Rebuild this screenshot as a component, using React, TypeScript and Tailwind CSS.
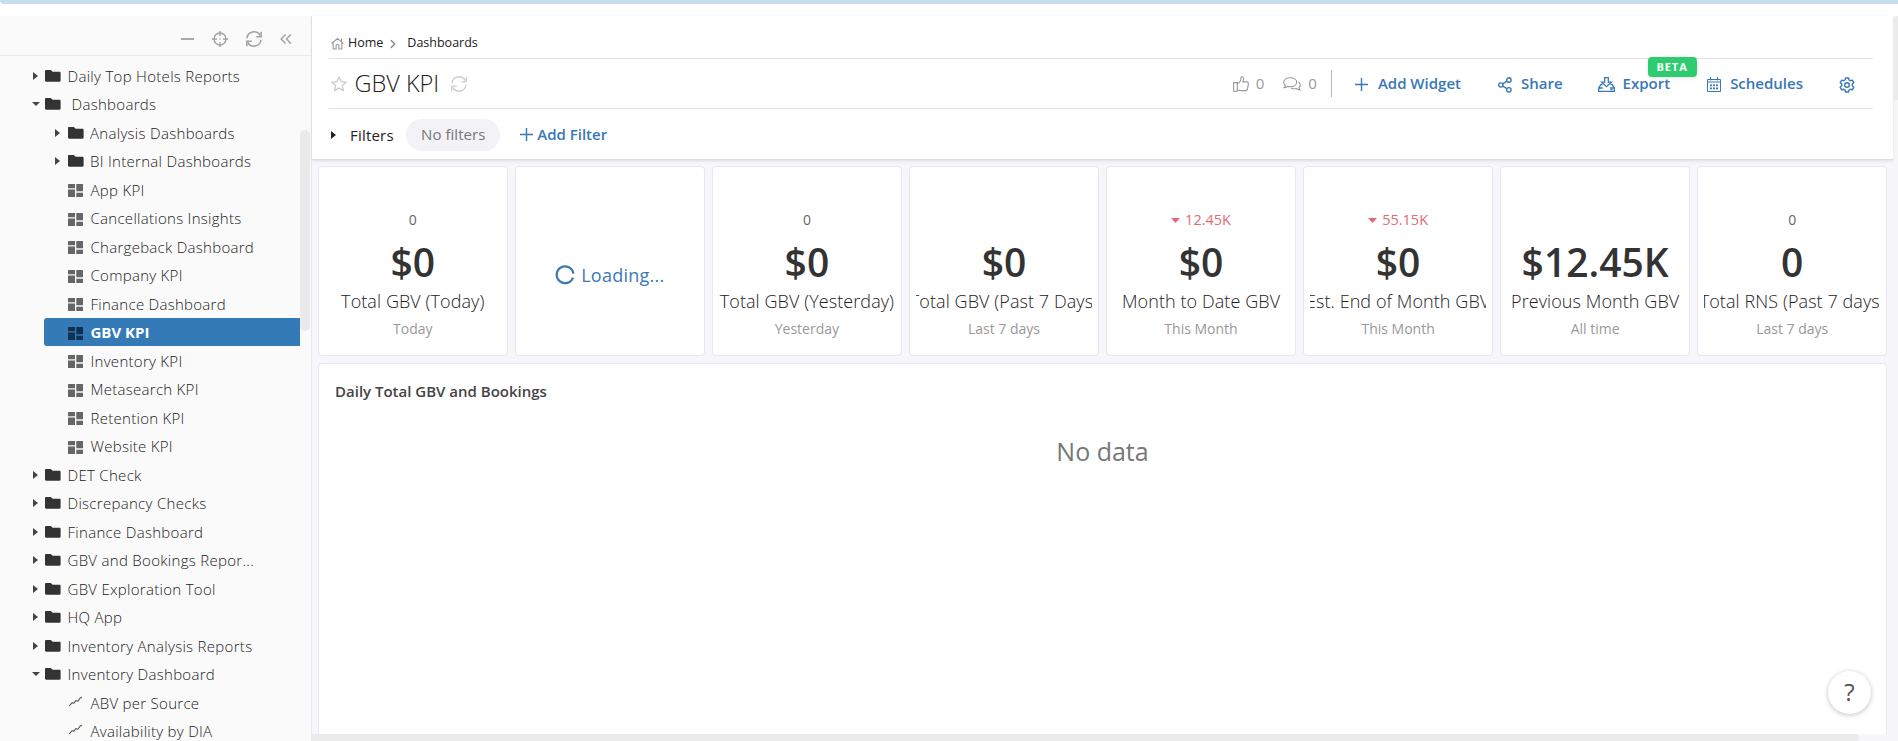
import React from "react";
import { LuChevronRight } from "react-icons/lu";

type Kind = "folder" | "board" | "chart";
type Node = { label: string; kind: Kind; level: 0 | 1; open?: boolean; active?: boolean; shift?: boolean };

const nodes: Node[] = [
  { label: "Daily Top Hotels Reports", kind: "folder", level: 0 },
  { label: "Dashboards", kind: "folder", level: 0, open: true, shift: true },
  { label: "Analysis Dashboards", kind: "folder", level: 1 },
  { label: "BI Internal Dashboards", kind: "folder", level: 1 },
  { label: "App KPI", kind: "board", level: 1 },
  { label: "Cancellations Insights", kind: "board", level: 1 },
  { label: "Chargeback Dashboard", kind: "board", level: 1 },
  { label: "Company KPI", kind: "board", level: 1 },
  { label: "Finance Dashboard", kind: "board", level: 1 },
  { label: "GBV KPI", kind: "board", level: 1, active: true },
  { label: "Inventory KPI", kind: "board", level: 1 },
  { label: "Metasearch KPI", kind: "board", level: 1 },
  { label: "Retention KPI", kind: "board", level: 1 },
  { label: "Website KPI", kind: "board", level: 1 },
  { label: "DET Check", kind: "folder", level: 0 },
  { label: "Discrepancy Checks", kind: "folder", level: 0 },
  { label: "Finance Dashboard", kind: "folder", level: 0 },
  { label: "GBV and Bookings Repor...", kind: "folder", level: 0 },
  { label: "GBV Exploration Tool", kind: "folder", level: 0 },
  { label: "HQ App", kind: "folder", level: 0 },
  { label: "Inventory Analysis Reports", kind: "folder", level: 0 },
  { label: "Inventory Dashboard", kind: "folder", level: 0, open: true },
  { label: "ABV per Source", kind: "chart", level: 1 },
  { label: "Availability by DIA", kind: "chart", level: 1 },
];

type Card = { delta?: string; down?: boolean; value?: string; title?: string; period?: string; loading?: boolean };

const cards: Card[] = [
  { delta: "0", value: "$0", title: "Total GBV (Today)", period: "Today" },
  { loading: true },
  { delta: "0", value: "$0", title: "Total GBV (Yesterday)", period: "Yesterday" },
  { value: "$0", title: "Total GBV (Past 7 Days)", period: "Last 7 days" },
  { delta: "12.45K", down: true, value: "$0", title: "Month to Date GBV", period: "This Month" },
  { delta: "55.15K", down: true, value: "$0", title: "Est. End of Month GBV", period: "This Month" },
  { value: "$12.45K", title: "Previous Month GBV", period: "All time" },
  { delta: "0", value: "0", title: "Total RNS (Past 7 days)", period: "Last 7 days" },
];

function Refresh({ className }: { className: string }) {
  return (
    <svg viewBox="0 0 16 16" className={className} fill="none" stroke="currentColor">
      <path d="M1 7.2A7 7 0 0 1 14.2 4.6M15 8.8A7 7 0 0 1 1.8 11.4" />
      <path d="M15.2.8v5h-5M.8 15.2v-5h5" />
    </svg>
  );
}

function Caret({ open }: { open?: boolean }) {
  return open ? (
    <svg viewBox="0 0 8 4" className="h-1 w-2" fill="#444">
      <path d="M0 0h8L4 4z" />
    </svg>
  ) : (
    <svg viewBox="0 0 5 8" className="ml-px h-2 w-[5px]" fill="#444">
      <path d="M0 0l5 4-5 4z" />
    </svg>
  );
}

function NodeIcon({ kind, active }: { kind: Kind; active?: boolean }) {
  if (kind === "folder")
    return (
      <svg viewBox="0 0 16 12" className="h-3 w-4 shrink-0" fill="#333">
        <path d="M1.2 0h4.6l1.800 1.700h6.800c.8 0 1.200.5 1.200 1.200v7.600c0 .8-.4 1.200-1.200 1.200H1.200C.4 11.700 0 11.300 0 10.500V1.200C0 .4.4 0 1.200 0z" />
      </svg>
    );
  if (kind === "board")
    return (
      <svg viewBox="0 0 15 13" className="mt-0.5 h-[13px] w-[15px] shrink-0" fill={active ? "#103250" : "#666"}>
        <path d="M.6 0H7v4.300H0V.6Q0 0 .6 0zM0 5.600h7V13H.6Q0 13 0 12.400zM8.300 0h6.100q.6 0 .6.6v6.700H8.300zM8.300 8.700H15v3.700q0 .6-.6.6H8.300z" />
      </svg>
    );
  return (
    <svg viewBox="0 0 15 12" className="mb-0.5 h-3 w-[15px] shrink-0" fill="none" stroke="#555" strokeWidth="1.100">
      <path d="M1.200 9.900l3-3.300 1.500.8 2.100-2.700 2.100.5 2.300-3.300 1.800-.7" />
    </svg>
  );
}

function Row({ node }: { node: Node }) {
  return (
    <div className="flex h-[28.5px] items-center">
      <div className={node.level === 0 ? "flex w-[45px] shrink-0 justify-start pl-8" : node.kind === "folder" ? "flex w-[67.5px] shrink-0 pl-[54px]" : "w-[44px] shrink-0"}>
        {node.kind === "folder" && <Caret open={node.open} />}
      </div>
      <div
        className={
          node.active
            ? "flex h-7 flex-1 items-center rounded-l-[3px] bg-[#337ab7] pl-6 text-[15px] font-bold text-white"
            : node.kind === "folder"
              ? "flex flex-1 items-center text-[15px] font-light tracking-[0.3px] text-[#222]"
              : "flex flex-1 items-center pl-6 text-[15px] font-light tracking-[0.28px] text-[#222]"
        }
      >
        <NodeIcon kind={node.kind} active={node.active} />
        <span className={node.shift ? "ml-[10.5px] whitespace-nowrap" : node.kind === "folder" ? "ml-[6.5px] whitespace-nowrap" : "ml-[7.5px] whitespace-nowrap"}>{node.label}</span>
      </div>
    </div>
  );
}

function Kpi({ card }: { card: Card }) {
  if (card.loading)
    return (
      <div className="flex min-w-0 items-center justify-center rounded border border-[#e7e8ef] bg-white pt-[27px] text-lg leading-6 tracking-[0.25px] text-[#3b79b3]">
        <svg viewBox="0 0 20 20" className="mr-1.5 size-5" fill="none" stroke="currentColor" strokeWidth="2.200">
          <path d="M18 12.600A8.400 8.400 0 1 1 18.400 8.600" />
        </svg>
        Loading...
      </div>
    );
  return (
    <div className="flex min-w-0 flex-col items-center overflow-hidden rounded border border-[#e7e8ef] bg-white px-1.5 pt-[43px]">
      <div className={card.down ? "flex h-5 items-center text-[14.5px] text-[#e26a73]" : "flex h-5 items-center text-sm text-[#666]"}>
        {card.down && (
          <svg viewBox="0 0 9 5" className="mr-[5px] h-[5px] w-[9px]" fill="currentColor">
            <path d="M0 0h9L4.500 5z" />
          </svg>
        )}
        {card.delta}
      </div>
      <div className="mt-[9px] h-[46px] text-[39px] leading-[46px] font-semibold text-[#333]">{card.value}</div>
      <div className="flex h-8 w-full justify-center overflow-hidden text-lg leading-8 font-light tracking-[0.08px] whitespace-nowrap text-[#222]">
        <span className="shrink-0">{card.title}</span>
      </div>
      <div className="mt-0.5 text-sm leading-5 text-[#999]">{card.period}</div>
    </div>
  );
}

export default function App() {
  return (
    <div className="relative flex h-[741px] w-full flex-col overflow-hidden bg-white font-['Open_Sans',sans-serif]">
      <div className="h-1 shrink-0 rounded-bl bg-[#c5dfee]" />
      <div className="mt-3 flex min-h-0 flex-1">
        <aside className="flex w-[312px] shrink-0 flex-col border-r border-[#e8e8ee] bg-[#fafafa]">
          <div className="flex h-10 shrink-0 items-center border-b border-[#eaeaea] pt-[7px] pl-[181px] text-[#a3a3a3]">
            <div className="h-[1.5px] w-[13px] bg-[#a8a8a8]" />
            <svg viewBox="0 0 16 16" className="ml-[18px] size-4" fill="none" stroke="currentColor" strokeWidth="1.400">
              <circle cx="8" cy="8" r="6" />
              <path d="M8 0v5M8 11v5M0 8h5M11 8h5M7.500 8h1" />
            </svg>
            <Refresh className="ml-[18px] size-4 stroke-[1.6]" />
            <svg viewBox="0 0 12 10" className="ml-[18px] h-2.5 w-3" fill="none" stroke="currentColor" strokeWidth="1.500">
              <path d="M5.500.5L1.200 5l4.300 4.500M10.800.5L6.500 5l4.300 4.500" />
            </svg>
          </div>
          <div className="flex min-h-0 flex-1">
            <nav className="w-[300px] shrink-0 overflow-hidden pt-[5.5px]">
              {nodes.map((n, i) => (
                <Row key={i} node={n} />
              ))}
            </nav>
            <div className="mt-[74px] h-[201px] w-2.5 rounded-[5px] bg-[#eaeaea]" />
          </div>
        </aside>

        <main className="flex min-w-0 flex-1 flex-col bg-[#f6f6fb]">
          <div className="flex h-[144px] shrink-0">
            <header className="w-[1581px] shrink-0 border-b border-[#dcdde2] bg-white pr-5 pl-[17px] shadow-[0_1px_3px_rgba(0,0,0,0.1)]">
              <div className="flex h-[43px] items-center border-b border-[#e3e3e3] pt-[13px] text-[12.5px] text-[#222]">
                <svg viewBox="0 0 14 13" className="mr-1 ml-0.5 h-[13px] w-[13px]" fill="none" stroke="#999" strokeWidth="1.200">
                  <path d="M.6 6.500L7 1l6.400 5.500M2.300 5.200v7.200h3.200V8.200q1.500-1.800 3 0v4.200h3.200V5.200M11.300 4V1.500" />
                </svg>
                Home
                <LuChevronRight className="mr-[7px] ml-[3px] size-3.5 text-[#888]" strokeWidth={2.5} />
                Dashboards
              </div>
              <div className="flex h-[50px] items-center border-b border-[#e3e3e3]">
                <svg viewBox="0 0 16 16" className="ml-[1.5px] size-4" fill="none" stroke="#ccc" strokeWidth="1.300">
                  <path d="M8 1l2.100 4.600 5 .6-3.700 3.400 1 5L8 12.100l-4.400 2.500 1-5L.9 6.200l5-.6z" />
                </svg>
                <h1 className="mb-0.5 ml-2 text-[23.5px] leading-8 font-light text-[#222]">GBV KPI</h1>
                <Refresh className="ml-3 size-4 stroke-[1.3] text-[#ccc]" />
                <div className="ml-auto flex items-center text-[15px] text-[#999]">
                  <svg viewBox="0 0 16 16" className="mr-[7px] size-4" fill="none" stroke="currentColor" strokeWidth="1.100">
                    <path d="M.6 6.600h3.700v8.600H.6zM4.300 7.500c2.200-.6 3.700-2.700 3.700-5.400 0-2 2.600-1.900 2.600.3 0 1.500-.4 2.500-.8 3.500h4c1.500 0 1.900 1.300 1.300 2.400.4.600.3 1.300-.2 1.800.3.700.1 1.400-.4 1.800.3 1.700-.5 2.700-2 2.700H8.300c-1.600 0-2.400-.7-4-.9" />
                  </svg>
                  0
                  <svg viewBox="0 0 18 14" className="mr-[7px] ml-[19px] h-3.5 w-[18px]" fill="none" stroke="currentColor" strokeWidth="1.100">
                    <path d="M7.200.7c3.700 0 6.500 1.900 6.500 4.500s-2.800 4.500-6.500 4.500c-.9 0-1.700-.1-2.500-.3-.9.8-2.100 1.200-3.600 1.300.8-.8 1.200-1.500 1.300-2.300C1.300 7.500.7 6.400.7 5.200.7 2.600 3.500.7 7.200.7zM15.300 5c1.300.7 2 1.700 2 2.900 0 1-.5 1.900-1.400 2.600.1.900.5 1.600 1.200 2.500-1.500-.1-2.600-.6-3.400-1.400-2 .4-4 .2-5.600-.7" />
                  </svg>
                  0
                </div>
                <div className="ml-3.5 h-[27px] w-px bg-[#bbb]" />
                <div className="mb-px flex items-center text-[15px] font-semibold text-[#3878b5]">
                  <svg viewBox="0 0 13 13" className="mt-[3px] mr-2.5 ml-[23px] size-[13px]" stroke="currentColor" strokeWidth="1.400">
                    <path d="M6.500 0v13M0 6.500h13" />
                  </svg>
                  Add Widget
                  <svg viewBox="0 0 14 16" className="mt-[3px] mr-[9px] ml-[37px] h-4 w-3.5" fill="none" stroke="currentColor" strokeWidth="1.400">
                    <circle cx="2.800" cy="8" r="2.100" />
                    <circle cx="10.900" cy="3" r="2.200" />
                    <circle cx="10.900" cy="12.800" r="2.200" />
                    <path d="M4.700 6.900L9 4.200M4.700 9.100L9 11.700" />
                  </svg>
                  Share
                  <svg viewBox="0 0 17 15" className="mt-[3px] mr-2 ml-[35px] h-[15px] w-[17px]" fill="none" stroke="currentColor" strokeWidth="1.300">
                    <path d="M6.700.7h3.600v4.500h3L8.500 9.700 3.700 5.200h3zM4.500 7.500H3L.7 11v3.300h15.600V11L14 7.500h-1.500M.7 11h4M12 11h4.300M12.500 12.600h2" />
                  </svg>
                  <div className="relative">
                    Export
                    <span className="absolute -top-[15px] left-[25px] flex h-5 w-[49px] items-center justify-center rounded bg-[#2ecc71] text-[11px] font-bold tracking-[0.9px] text-white shadow-[0_1px_4px_rgba(0,0,0,0.12)]">
                      BETA
                    </span>
                  </div>
                  <svg viewBox="0 0 14 15" className="mt-[3px] mr-[9px] ml-[37px] h-[15px] w-3.5" fill="none" stroke="currentColor" strokeWidth="1">
                    <path d="M.5 2.500h13v12H.5zM.5 5h13M3.500 0v3.500M10.500 0v3.500" />
                    <path strokeWidth="1.800" strokeDasharray="2 1" d="M3 8.400h8M3 11.400h8" />
                  </svg>
                  Schedules
                  <svg viewBox="0 0 16 16" className="mt-[3px] mr-[18px] ml-[36px] size-4" fill="none" stroke="currentColor" strokeWidth="1.400" strokeLinejoin="round">
                    <circle cx="8" cy="8" r="2.300" />
                    <path d="M6.500 1h3l.5 2 1.300.7 2-.6 1.500 2.500-1.500 1.500v1.700l1.500 1.500-1.500 2.500-2-.5-1.300.7-.5 2h-3l-.5-2-1.300-.7-2 .5-1.500-2.500 1.500-1.500V7.100L1.200 5.600l1.500-2.500 2 .6L6 3z" />
                  </svg>
                </div>
              </div>
              <div className="flex h-[50px] items-center pt-0.5 text-[15px]">
                <svg viewBox="0 0 5 8" className="ml-[1.5px] h-2 w-[5px]" fill="#222">
                  <path d="M0 0l5 4-5 4z" />
                </svg>
                <span className="ml-[14.5px] tracking-[0.2px] text-[#222]">Filters</span>
                <span className="mb-px ml-[12.5px] flex h-8 w-[94px] items-center justify-center rounded-full bg-[#f2f2f7] tracking-[0.05px] text-[#777]">No filters</span>
                <span className="mb-0.5 ml-5 flex items-center font-semibold text-[#3878b5]">
                  <svg viewBox="0 0 13 13" className="mr-1 size-[13px]" stroke="currentColor" strokeWidth="1.400">
                    <path d="M6.500 0v13M0 6.500h13" />
                  </svg>
                  Add Filter
                </span>
              </div>
            </header>
            <div className="h-[84px] w-[5px] rounded-l bg-[#ebebeb]" />
          </div>

          <div className="mt-1.5 ml-1.5 grid h-[190px] w-[1569px] shrink-0 grid-cols-8 gap-[7.5px]">
            {cards.map((c, i) => (
              <Kpi key={i} card={c} />
            ))}
          </div>
          <section className="mt-[7px] ml-1.5 flex min-h-0 w-[1569px] flex-1 flex-col rounded-t border border-b-0 border-[#e7e8ef] bg-white">
            <h2 className="mt-[17px] ml-4 text-[15px] leading-5 font-semibold text-[#444]">Daily Total GBV and Bookings</h2>
            <p className="mt-[34px] text-center text-[25px] leading-8 text-[#777]">No data</p>
          </section>
          <div className="h-[7px] w-[1547px] shrink-0 rounded-r bg-[#ebebeb]" />
        </main>
      </div>
      <button className="absolute right-[27px] bottom-[27px] flex size-[43px] items-center justify-center rounded-full bg-white pb-0.5 text-2xl text-[#555] shadow-[0_1px_5px_rgba(0,0,0,0.25)]">?</button>
    </div>
  );
}
